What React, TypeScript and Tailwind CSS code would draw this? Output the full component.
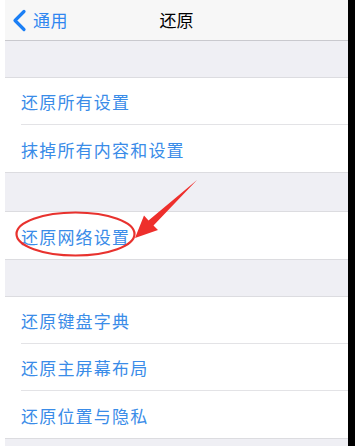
import React from "react";

const font = { fontFamily: '"Noto Sans CJK SC", "Noto Sans", sans-serif' };

type RowProps = { label: string; last?: boolean };

const Row = ({ label, last }: RowProps) => (
  <div className="flex h-[47px] bg-white pl-[16px]">
    <div
      className={`flex flex-1 items-center pt-[2px] text-[17px] tracking-[1.2px] text-[#3a8ce8] ${
        last ? "" : "border-b border-[#e3e3e6]"
      }`}
    >
      {label}
    </div>
  </div>
);

const Group = ({ items }: { items: string[] }) => (
  <div className="border-y border-[#dcdce0]">
    {items.map((label, i) => (
      <Row key={label} label={label} last={i === items.length - 1} />
    ))}
  </div>
);

const Gap = ({ h }: { h: string }) => <div className={`${h} bg-[#efeff4]`} />;

export default function App() {
  return (
    <div className="flex h-[446px] w-[355px] overflow-hidden bg-white" style={font}>
      <div className="w-[5px] bg-white" />
      <div className="relative flex w-[343px] flex-col bg-[#efeff4]">
        <div className="relative flex h-[41px] items-center border-b border-[#c9c9ce] bg-[#f7f7f7]">
          <div className="flex items-center pl-[7px] text-[17px] text-[#2f86f0]">
            <svg width="15" height="23" viewBox="0 0 15 23" className="mr-[6px]">
              <path
                d="M12 2.5 L3 11.5 L12 20.5"
                fill="none"
                stroke="#1b7ff5"
                strokeWidth="3.2"
                strokeLinecap="round"
                strokeLinejoin="round"
              />
            </svg>
            <span className="tracking-[0.5px]">通用</span>
          </div>
          <div className="absolute inset-x-0 text-center text-[17px] font-normal text-black">
            还原
          </div>
        </div>
        <Gap h="h-[36px]" />
        <Group items={["还原所有设置", "抹掉所有内容和设置"]} />
        <Gap h="h-[38px]" />
        <Group items={["还原网络设置"]} />
        <Gap h="h-[36px]" />
        <Group items={["还原键盘字典", "还原主屏幕布局", "还原位置与隐私"]} />
        <div className="flex-1 bg-[#efeff4]" />
        <svg
          className="pointer-events-none absolute left-0 top-0"
          width="343"
          height="446"
          viewBox="0 0 343 446"
        >
          <ellipse cx="70.5" cy="234" rx="59" ry="21.5" fill="none" stroke="#e8322e" strokeWidth="2.2" />
          <polygon
            points="130,238 139,215.5 143.5,220.5 192,180 148.5,225.5 153,230"
            fill="#ee2f2c"
          />
        </svg>
      </div>
      <div className="w-[7px] bg-black" />
    </div>
  );
}
